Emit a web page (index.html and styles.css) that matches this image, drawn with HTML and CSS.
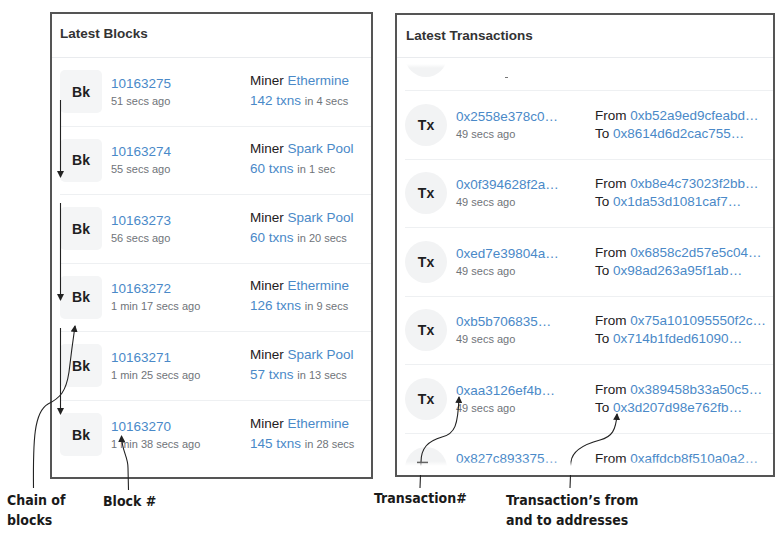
FILE: index.html
```html
<!DOCTYPE html>
<html>
<head>
<meta charset="utf-8">
<link rel="stylesheet" href="styles.css">
</head>
<body>
<div class="page">
  <section class="panel blocks">
    <div class="panel-head head-blocks">Latest Blocks</div>
    <div class="list blist">
      <div class="row">
        <div class="bk">Bk</div>
        <div class="col-l"><a class="link num">10163275</a><span class="muted">51 secs ago</span></div>
        <div class="col-r"><span class="line">Miner <a class="link">Ethermine</a></span><span class="line"><a class="link">142 txns</a> <span class="muted">in 4 secs</span></span></div>
      </div>
      <div class="row">
        <div class="bk">Bk</div>
        <div class="col-l"><a class="link num">10163274</a><span class="muted">55 secs ago</span></div>
        <div class="col-r"><span class="line">Miner <a class="link">Spark Pool</a></span><span class="line"><a class="link">60 txns</a> <span class="muted">in 1 sec</span></span></div>
      </div>
      <div class="row">
        <div class="bk">Bk</div>
        <div class="col-l"><a class="link num">10163273</a><span class="muted">56 secs ago</span></div>
        <div class="col-r"><span class="line">Miner <a class="link">Spark Pool</a></span><span class="line"><a class="link">60 txns</a> <span class="muted">in 20 secs</span></span></div>
      </div>
      <div class="row">
        <div class="bk">Bk</div>
        <div class="col-l"><a class="link num">10163272</a><span class="muted">1 min 17 secs ago</span></div>
        <div class="col-r"><span class="line">Miner <a class="link">Ethermine</a></span><span class="line"><a class="link">126 txns</a> <span class="muted">in 9 secs</span></span></div>
      </div>
      <div class="row">
        <div class="bk">Bk</div>
        <div class="col-l"><a class="link num">10163271</a><span class="muted">1 min 25 secs ago</span></div>
        <div class="col-r"><span class="line">Miner <a class="link">Spark Pool</a></span><span class="line"><a class="link">57 txns</a> <span class="muted">in 13 secs</span></span></div>
      </div>
      <div class="row">
        <div class="bk">Bk</div>
        <div class="col-l"><a class="link num">10163270</a><span class="muted">1 min 38 secs ago</span></div>
        <div class="col-r"><span class="line">Miner <a class="link">Ethermine</a></span><span class="line"><a class="link">145 txns</a> <span class="muted">in 28 secs</span></span></div>
      </div>
    </div>
  </section>

  <section class="panel txs">
    <div class="panel-head head-txs">Latest Transactions</div>
    <div class="list tlist">
      <div class="row trow partial">
        <div class="tx"></div>
        <div class="col-l"><span class="dash"></span></div>
        <div class="col-r"></div>
      </div>
      <div class="row trow">
        <div class="tx">Tx</div>
        <div class="col-l"><a class="link hash">0x2558e378c0…</a><span class="muted">49 secs ago</span></div>
        <div class="col-r"><span class="tline">From <a class="link">0xb52a9ed9cfeabd…</a></span><span class="tline">To <a class="link">0x8614d6d2cac755…</a></span></div>
      </div>
      <div class="row trow">
        <div class="tx">Tx</div>
        <div class="col-l"><a class="link hash">0x0f394628f2a…</a><span class="muted">49 secs ago</span></div>
        <div class="col-r"><span class="tline">From <a class="link">0xb8e4c73023f2bb…</a></span><span class="tline">To <a class="link">0x1da53d1081caf7…</a></span></div>
      </div>
      <div class="row trow">
        <div class="tx">Tx</div>
        <div class="col-l"><a class="link hash">0xed7e39804a…</a><span class="muted">49 secs ago</span></div>
        <div class="col-r"><span class="tline">From <a class="link">0x6858c2d57e5c04…</a></span><span class="tline">To <a class="link">0x98ad263a95f1ab…</a></span></div>
      </div>
      <div class="row trow">
        <div class="tx">Tx</div>
        <div class="col-l"><a class="link hash">0xb5b706835…</a><span class="muted">49 secs ago</span></div>
        <div class="col-r"><span class="tline">From <a class="link">0x75a101095550f2c…</a></span><span class="tline">To <a class="link">0x714b1fded61090…</a></span></div>
      </div>
      <div class="row trow">
        <div class="tx">Tx</div>
        <div class="col-l"><a class="link hash">0xaa3126ef4b…</a><span class="muted">49 secs ago</span></div>
        <div class="col-r"><span class="tline">From <a class="link">0x389458b33a50c5…</a></span><span class="tline">To <a class="link">0x3d207d98e762fb…</a></span></div>
      </div>
      <div class="row trow last">
        <div class="tx"></div>
        <div class="col-l"><a class="link hash">0x827c893375…</a></div>
        <div class="col-r"><span class="tline">From <a class="link">0xaffdcb8f510a0a2…</a></span></div>
      </div>
    </div>
  </section>

  <svg class="notes" width="782" height="535" viewBox="0 0 782 535">
    <defs>
      <marker id="ah" markerUnits="userSpaceOnUse" markerWidth="7" markerHeight="7" refX="6" refY="3.5" orient="auto">
        <path d="M0,0 L7,3.5 L0,7 z" fill="#222"/>
      </marker>
    </defs>
    <g fill="none" stroke="#222" stroke-width="1.1">
      <path d="M60.5 100 V177" marker-end="url(#ah)"/>
      <path d="M60.5 203 V300" marker-end="url(#ah)"/>
      <path d="M60.5 328 V414" marker-end="url(#ah)"/>
      <path d="M33.5 488 C33 440 34 412 48 404 C60 398 66 392 69 372 C71 355 73 340 75 326" marker-end="url(#ah)"/>
      <path d="M128.5 490 L128 468 C128 456 122 452 121.5 436" marker-end="url(#ah)"/>
      <path d="M420 488 L421 462 C421 448 428 441 442 437 C455 434 458 425 459 397" marker-end="url(#ah)"/>
      <path d="M570 488 L571 462 C572 450 585 444 600 440 C612 437 616 430 617 414" marker-end="url(#ah)"/>
      <path d="M417 462.5 H428" stroke-width="1.5"/>
    </g>
  </svg>

  <div class="note note-chain">Chain of<br>blocks</div>
  <div class="note note-block">Block #</div>
  <div class="note note-tx">Transaction#</div>
  <div class="note note-addr">Transaction’s from<br>and to addresses</div>
</div>
</body>
</html>
```

FILE: styles.css
```css
html, body {
  margin: 0;
  background: #ffffff;
}

.page {
  position: relative;
  width: 782px;
  height: 535px;
  box-sizing: border-box;
  padding: 12px 0 0 50px;
  display: flex;
  align-items: flex-start;
  gap: 22px;
  font-family: "Liberation Sans", Arial, sans-serif;
  color: #1e2022;
  overflow: hidden;
}

.panel {
  border: 2px solid #555555;
  box-sizing: border-box;
  background: #ffffff;
  overflow: hidden;
  display: flex;
  flex-direction: column;
}

.blocks {
  width: 323px;
  height: 467px;
}

.txs {
  width: 380px;
  height: 464px;
  margin-top: 1px;
}

.panel-head {
  flex: none;
  box-sizing: border-box;
  border-bottom: 1px solid #e9ebee;
  display: flex;
  align-items: center;
  padding-left: 8px;
  font-weight: bold;
  font-size: 13.5px;
  color: #333333;
}

.head-blocks {
  height: 44px;
  padding-bottom: 5px;
}

.head-txs {
  height: 43px;
  padding-left: 9px;
  padding-bottom: 2px;
}

.list {
  position: relative;
  flex: 1;
  overflow: hidden;
  padding-left: 8px;
}

.tlist::before,
.tlist::after {
  content: "";
  position: absolute;
  left: 0;
  right: 0;
  z-index: 1;
}

.tlist::before {
  top: 0;
  height: 10px;
  background: linear-gradient(#ffffff 0, #ffffff 6px, rgba(255,255,255,0) 10px);
}

.tlist::after {
  bottom: 0;
  height: 14px;
  background: linear-gradient(rgba(255,255,255,0) 0, #ffffff 5px, #ffffff 14px);
}

.row {
  height: 68.5px;
  box-sizing: border-box;
  border-bottom: 1px solid #eef0f2;
  display: grid;
  grid-template-columns: 42px 130px 1fr;
  column-gap: 9px;
  align-items: center;
}

.blist .row:last-child {
  border-bottom: none;
}

.partial {
  margin-top: -35.5px;
}

.trow.last {
  align-items: start;
  border-bottom: none;
}

.trow.last .tx {
  margin-top: 13px;
}

.trow.last .col-l,
.trow.last .col-r {
  margin-top: 16px;
}

.bk {
  width: 42px;
  height: 43px;
  border-radius: 5px;
  background: #f4f5f6;
  display: flex;
  align-items: center;
  justify-content: center;
  font-weight: bold;
  font-size: 14px;
  color: #1e2022;
}

.tx {
  width: 42px;
  height: 42px;
  border-radius: 50%;
  background: #f2f3f4;
  display: flex;
  align-items: center;
  justify-content: center;
  font-weight: bold;
  font-size: 14px;
  color: #1e2022;
}

.col-l, .col-r {
  display: flex;
  flex-direction: column;
  white-space: nowrap;
}

.link {
  color: #4a89c8;
  text-decoration: none;
}

.num {
  font-size: 13.5px;
  line-height: 19px;
}

.muted {
  font-size: 11px;
  line-height: 17px;
  color: #6f7479;
}

.line {
  font-size: 13.5px;
  line-height: 20px;
}

.col-r {
  padding-bottom: 2px;
}

.hash {
  font-size: 13.5px;
  line-height: 18px;
}

.trow .muted {
  line-height: 16px;
}

.trow .col-r {
  padding-bottom: 0;
}

.tline {
  font-size: 13.5px;
  line-height: 18px;
}

.dash {
  display: block;
  width: 3px;
  height: 1px;
  background: #777777;
  margin: 42px 0 0 49px;
}

.notes {
  position: absolute;
  left: 0;
  top: 0;
  pointer-events: none;
}

.note {
  position: absolute;
  font-family: "DejaVu Sans Condensed", "DejaVu Sans", sans-serif;
  font-stretch: condensed;
  font-weight: bold;
  font-size: 14px;
  line-height: 20px;
  color: #1a1a1a;
  white-space: nowrap;
}

.note-chain {
  left: 7px;
  top: 490px;
}

.note-block {
  left: 103px;
  top: 491px;
}

.note-tx {
  left: 374px;
  top: 488px;
}

.note-addr {
  left: 506px;
  top: 490px;
}
```
